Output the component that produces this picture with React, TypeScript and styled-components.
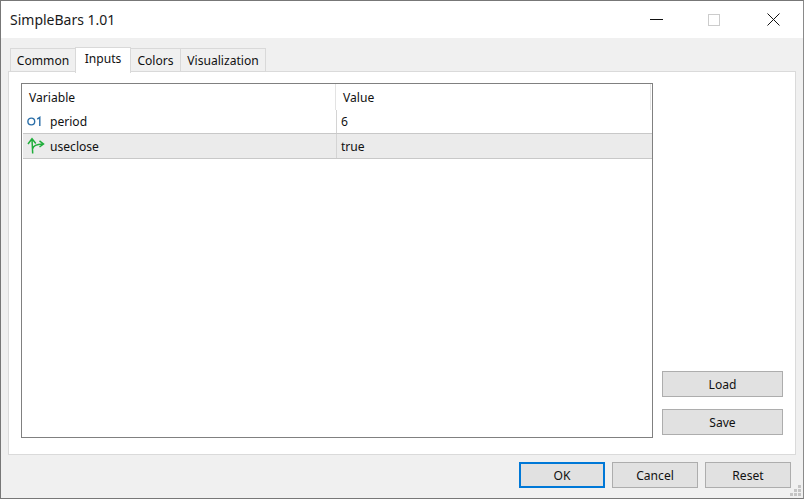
import React from 'react';
import styled, { createGlobalStyle } from 'styled-components';

const Global = createGlobalStyle`
  html, body { margin: 0; padding: 0; background: #fff; }
  body { font-family: "Noto Sans", "Open Sans", "Liberation Sans", sans-serif; font-size: 12.1px; color: #111; }
`;

const Window = styled.div`
  width: 804px; height: 499px; box-sizing: border-box;
  border: 1px solid #777; border-right-color: #8a8a8a;
  display: flex; flex-direction: column; background: #f0f0f0; position: relative;
`;
const TitleBar = styled.div`
  height: 37px; flex: none; background: #fff; display: flex; align-items: center;
  padding-left: 9px; font-size: 14px; color: #1a1a1a;
`;
const TitleText = styled.span` flex: 1; padding-bottom: 1px; `;
const WinButton = styled.div<{ $w?: number }>`
  width: ${p => p.$w ?? 58}px; height: 37px; display: flex; align-items: center; justify-content: center;
`;
const Body = styled.div`
  flex: 1; display: flex; flex-direction: column; padding: 0 7px 0 7px; min-height: 0;
`;
const TabBar = styled.div`
  height: 34px; flex: none; display: flex; align-items: flex-end; padding-left: 2px; position: relative; z-index: 1;
`;
const Tab = styled.div<{ $w: number; $active?: boolean }>`
  width: ${p => p.$w}px; box-sizing: border-box; display: flex; justify-content: center;
  border: 1px solid #d9d9d9;
  margin-right: -1px;
  height: ${p => (p.$active ? 26 : 24)}px;
  padding-top: ${p => (p.$active ? 2 : 3)}px;
  margin-bottom: ${p => (p.$active ? -1 : 0)}px;
  border-bottom: ${p => (p.$active ? 'none' : '1px solid #d9d9d9')};
  background: ${p => (p.$active ? '#fff' : '#f0f0f0')};
  z-index: ${p => (p.$active ? 2 : 1)};
  position: relative;
  line-height: 17px;
`;
const Panel = styled.div`
  width: 788px; height: 384px; flex: none; box-sizing: border-box; background: #fff; border: 1px solid #dadada;
  padding: 11px 12px 17px 12px; display: flex; gap: 9px; margin-top: -1px;
`;
const TableBox = styled.div`
  width: 632px; height: 355px; flex: none; box-sizing: border-box; border: 1px solid #808080; padding: 0 0 0 1px; display: flex; flex-direction: column;
`;
const HeaderRow = styled.div`
  height: 27px; flex: none; display: grid; grid-template-columns: 313px 315px;
`;
const HeaderCell = styled.div<{ $last?: boolean }>`
  padding: 5px 0 0 ${p => (p.$last ? 7 : 6)}px; line-height: 18px; box-sizing: border-box; height: 26px;
  border-right: 1px solid #e3e3e3;
`;
const Row = styled.div<{ $selected?: boolean }>`
  height: ${p => (p.$selected ? 25 : 24)}px; flex: none; display: grid; grid-template-columns: 314px 1fr; box-sizing: border-box;
  margin-top: ${p => (p.$selected ? 0 : -1)}px;
  background: ${p => (p.$selected ? '#ebebeb' : '#fff')};
  border-bottom: 1px solid #c8c8c8;
  width: 629px;
`;
const NameCell = styled.div`
  display: flex; align-items: center; border-right: 1px solid #d4d4d4; box-sizing: border-box;
`;
const IconSlot = styled.div` width: 27px; flex: none; display: flex; padding-left: 4px; box-sizing: border-box; `;
const ValueCell = styled.div` display: flex; align-items: center; padding-left: 4px; `;
const Side = styled.div`
  flex: 1; display: flex; flex-direction: column; justify-content: flex-end; gap: 12px; padding-bottom: 2px;
`;
const Button = styled.div<{ $primary?: boolean; $w?: number }>`
  width: ${p => p.$w ?? 121}px; height: 26px; box-sizing: border-box; background: #e1e1e1;
  border: ${p => (p.$primary ? '2px solid #0078d7' : '1px solid #adadad')};
  display: flex; align-items: center; justify-content: center;
`;
const Footer = styled.div`
  flex: 1; display: flex; justify-content: flex-end; gap: 7px; padding: 7px 5px 0 0;
`;
const Grip = styled.svg` position: absolute; right: 1px; bottom: 1px; `;

const PeriodIcon = () => (
  <svg width="16" height="14" viewBox="0 0 16 14">
    <circle cx="4.3" cy="6.5" r="3.4" fill="none" stroke="#2a6ea8" strokeWidth="1.4" />
    <path d="M10.2 4.2 L12.8 2.4 V11" fill="none" stroke="#2a6ea8" strokeWidth="1.4" />
  </svg>
);
const BoolIcon = () => (
  <svg width="18" height="18" viewBox="0 0 18 18">
    <path d="M5.7 16.5 L5 2.5 M1 7 L5 1.8 L8.8 6.5 M5.5 12 C6.5 8.5 9 7.5 16 7 M12.5 3.8 L16.5 7 L12.5 10" fill="none" stroke="#1fae3a" strokeWidth="1.5" />
  </svg>
);

export default function App() {
  return (
    <>
      <Global />
      <Window>
        <TitleBar>
          <TitleText>SimpleBars 1.01</TitleText>
          <WinButton>
            <svg width="13" height="3" viewBox="0 0 13 3"><path d="M0 1.5H13" stroke="#111" strokeWidth="1" /></svg>
          </WinButton>
          <WinButton>
            <svg width="12" height="12" viewBox="0 0 12 12"><rect x=".5" y=".5" width="11" height="11" fill="none" stroke="#ccc" /></svg>
          </WinButton>
          <WinButton $w={60}>
            <svg width="13" height="13" viewBox="0 0 13 13"><path d="M.5.5L12.5 12.5M12.5.5L.5 12.5" stroke="#111" strokeWidth="1" fill="none" /></svg>
          </WinButton>
        </TitleBar>
        <Body>
          <TabBar>
            <Tab $w={66}>Common</Tab>
            <Tab $w={56} $active>Inputs</Tab>
            <Tab $w={51}>Colors</Tab>
            <Tab $w={86}>Visualization</Tab>
          </TabBar>
          <Panel>
            <TableBox>
              <HeaderRow>
                <HeaderCell>Variable</HeaderCell>
                <HeaderCell $last>Value</HeaderCell>
              </HeaderRow>
              <Row>
                <NameCell><IconSlot><PeriodIcon /></IconSlot>period</NameCell>
                <ValueCell>6</ValueCell>
              </Row>
              <Row $selected>
                <NameCell><IconSlot><BoolIcon /></IconSlot>useclose</NameCell>
                <ValueCell>true</ValueCell>
              </Row>
            </TableBox>
            <Side>
              <Button>Load</Button>
              <Button>Save</Button>
            </Side>
          </Panel>
          <Footer>
            <Button $primary $w={86}>OK</Button>
            <Button $w={86}>Cancel</Button>
            <Button $w={86}>Reset</Button>
          </Footer>
        </Body>
        <Grip width="12" height="12" viewBox="0 0 12 12" fill="#c4c4c4">
          <rect x="8" y="0" width="3" height="3" />
          <rect x="4" y="4" width="3" height="3" />
          <rect x="8" y="4" width="3" height="3" />
          <rect x="0" y="8" width="3" height="3" />
          <rect x="4" y="8" width="3" height="3" />
          <rect x="8" y="8" width="3" height="3" />
        </Grip>
      </Window>
    </>
  );
}
